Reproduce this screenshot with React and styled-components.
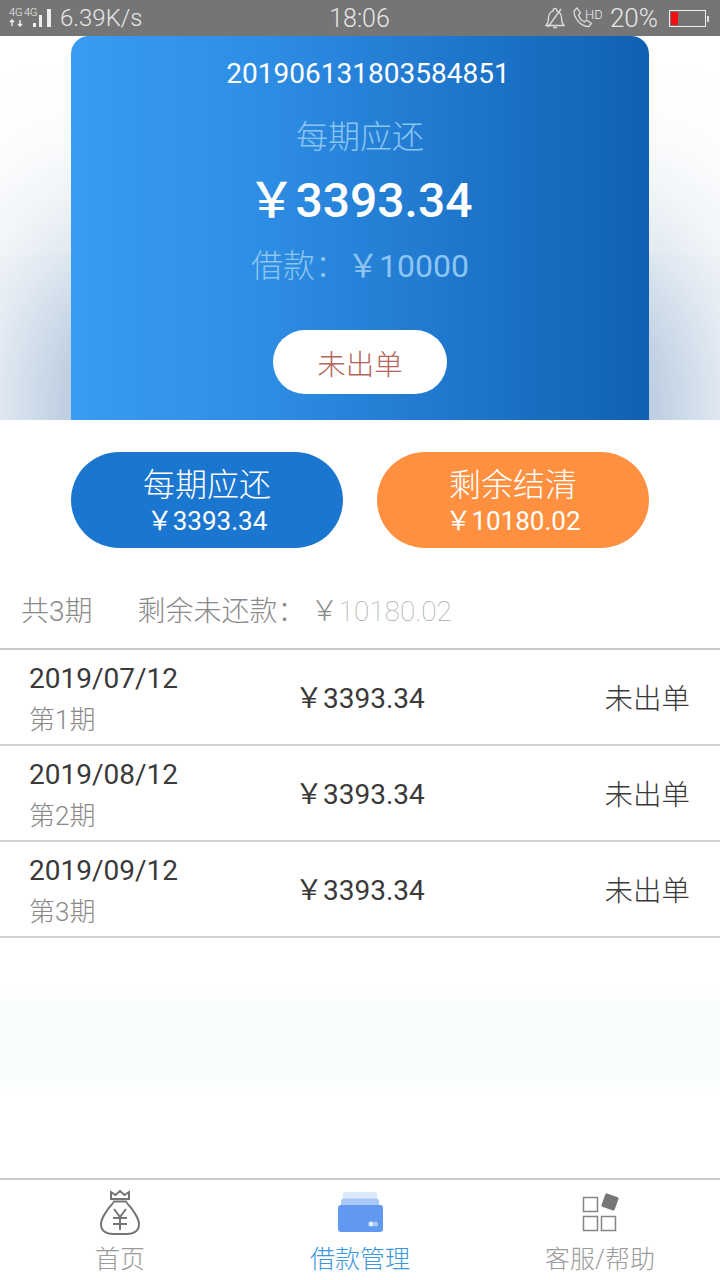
import React from "react";
import styled, { createGlobalStyle } from "styled-components";

const Global = createGlobalStyle`
  html, body { margin: 0; padding: 0; background: #fff; }
  body { font-family: Roboto, "Noto Sans CJK SC", sans-serif; }
  * { box-sizing: border-box; }
`;

const rows = [
  { date: "2019/07/12", term: "第1期" },
  { date: "2019/08/12", term: "第2期" },
  { date: "2019/09/12", term: "第3期" },
];

const Page = styled.div`
  width: 720px;
  height: 1280px;
  display: flex;
  flex-direction: column;
  overflow: hidden;
  background: #fff;
`;

const StatusBar = styled.div`
  height: 36px;
  flex: none;
  background: #757575;
  color: #e6e6e6;
  display: grid;
  grid-template-columns: 1fr auto 1fr;
  align-items: center;
  padding: 0 10px 0 9px;
  font-size: 25px;
  font-weight: 300;
`;

const StatusLeft = styled.div`
  display: flex;
  align-items: center;
  gap: 7px;
  font-size: 24px;
`;

const StatusRight = styled.div`
  display: flex;
  align-items: center;
  justify-content: flex-end;
  gap: 8px;
  font-size: 26px;
`;

const Battery = styled.div`
  width: 37px;
  height: 17px;
  border: 1px solid #eee;
  padding: 1px;
  margin: 0 4px 0 3px;
  position: relative;
  &::before {
    content: "";
    display: block;
    width: 7px;
    height: 100%;
    background: #f01010;
  }
  &::after {
    content: "";
    position: absolute;
    right: -4px;
    top: 5px;
    width: 2px;
    height: 6px;
    background: #ddd;
  }
`;

const Hero = styled.div`
  height: 384px;
  flex: none;
  overflow: hidden;
  display: flex;
  justify-content: center;
`;

const Card = styled.div`
  width: 578px;
  height: 384px;
  border-radius: 18px 18px 0 0;
  background: linear-gradient(90deg, #379cf2 0%, #2f8fe6 30%, #1f78cd 65%, #1060b3 100%);
  box-shadow: 0 230px 180px rgba(20, 80, 150, 0.72);
  display: flex;
  flex-direction: column;
  align-items: center;
  color: #fff;
`;

const OrderNo = styled.div`
  margin: 19px 0 0 16px;
  font-size: 28px;
  line-height: 38px;
`;

const CardLabel = styled.div`
  margin-top: 24px;
  font-size: 32px;
  line-height: 40px;
  font-weight: 300;
  color: #8cc4f2;
`;

const CardAmount = styled.div`
  margin-top: 17px;
  font-size: 48px;
  line-height: 54px;
  font-weight: 500;
`;

const CardLoan = styled.div`
  margin-top: 17px;
  font-size: 32px;
  line-height: 42px;
  font-weight: 300;
  color: #8cc4f2;
`;

const LoanValue = styled.span`
  font-weight: 400;
`;

const StatusPill = styled.div`
  margin-top: 43px;
  width: 174px;
  height: 64px;
  border-radius: 32px;
  background: #fff;
  color: #b5655a;
  font-size: 28.5px;
  font-weight: 300;
  display: flex;
  align-items: center;
  justify-content: center;
`;

const Actions = styled.div`
  display: flex;
  justify-content: center;
  gap: 34px;
  margin-top: 32px;
`;

const ActionButton = styled.div`
  width: 272px;
  height: 96px;
  border-radius: 48px;
  padding-top: 2px;
  background: ${(p) => p.$bg};
  color: #fff;
  display: flex;
  flex-direction: column;
  align-items: center;
  justify-content: center;
`;

const ActionTitle = styled.div`
  font-size: 32px;
  line-height: 38px;
  font-weight: 300;
`;

const ActionAmount = styled.div`
  margin-top: 2px;
  font-size: 26px;
  line-height: 30px;
`;

const Summary = styled.div`
  height: 100px;
  display: flex;
  align-items: center;
  padding: 22px 0 0 21px;
  font-size: 28px;
  font-weight: 300;
  color: #8a8a8a;
  gap: 45px;
`;

const SummaryYen = styled.span`
  margin-left: 5px;
`;

const Remain = styled.span`
  color: #aaa;
  font-weight: 100;
`;

const Table = styled.div`
  border-top: 2px solid #c9c9c9;
`;

const Row = styled.div`
  height: 96px;
  border-bottom: 2px solid #cfcfcf;
  display: grid;
  grid-template-columns: 266px 1fr auto;
  align-items: center;
  padding: 0 30px 0 29px;
  color: #3a3a3a;
  font-size: 28px;
`;

const RowDateBlock = styled.div`
  padding-top: 4px;
`;

const RowDate = styled.div`
  line-height: 40px;
  margin-bottom: 2px;
`;

const RowTerm = styled.div`
  font-size: 26px;
  line-height: 38px;
  color: #8a8a8a;
  font-weight: 300;
`;

const Cell = styled.div`
  padding-bottom: 2px;
  font-size: ${(p) => p.$size || 28}px;
  font-weight: ${(p) => p.$weight || 400};
`;

const Spacer = styled.div`
  flex: 1;
  background: linear-gradient(180deg, #fff 52px, #fafdfd 72px, #fbfefe 140px, #fff 156px);
`;

const TabBar = styled.div`
  height: 102px;
  flex: none;
  border-top: 2px solid #c9c9c9;
  display: grid;
  grid-template-columns: 240px 240px 240px;
`;

const Tab = styled.div`
  display: flex;
  flex-direction: column;
  align-items: center;
  padding-top: 9px;
  color: ${(p) => (p.$active ? "#3d97dc" : "#9b9b9b")};
  font-size: 25px;
  font-weight: 300;
  line-height: 34px;
`;

const TabIcon = styled.svg`
  width: 50px;
  height: 48px;
  margin-bottom: 6px;
  flex: none;
`;

const SignalIcon = () => (
  <svg width="44" height="24" viewBox="0 0 44 24">
    <text x="0" y="10" fontSize="11" fill="#eee" fontFamily="Roboto">4G</text>
    <text x="15" y="10" fontSize="11" fill="#eee" fontFamily="Roboto">4G</text>
    <path d="M3 14v6M1 16l2-2 2 2M11 14v6M9 18l2 2 2-2" stroke="#eee" strokeWidth="1.500" fill="none" />
    <path d="M24 17h3v4h-3zM30 9h3v12h-3zM38 3h4v18h-4z" fill="#eee" />
  </svg>
);

const BellOff = () => (
  <svg width="20" height="22" viewBox="0 0 20 22" fill="none" stroke="#ddd" strokeWidth="1.3">
    <path d="M1 18.500h18c-2-2-2.500-4-2.500-7.500 0-3.500-2-6-4.500-6.800C12 2.500 11 1.500 10 1.500S8 2.500 8 4.200C5.500 5 3.500 7.500 3.500 11c0 3.500-.5 5.500-2.500 7.500z" />
    <path d="M8 20.500h4M3 20L16 2" />
  </svg>
);

const CallHd = () => (
  <svg width="29" height="24" viewBox="0 0 29 24" fill="none" stroke="#ddd" strokeWidth="1.3">
    <path d="M1 5l3-3 3.500 5-2 2c1 3 3 5.500 6 7l2-2 5 3.500-2.500 3C9 21 1 13 1 5z" />
    <text x="12" y="13" fontSize="13" fill="#eee" stroke="none" fontFamily="Roboto">HD</text>
  </svg>
);

const BagIcon = () => (
  <TabIcon viewBox="0 0 50 48" fill="none" stroke="#757575" strokeWidth="2">
    <path d="M16 3l4.500 3L25 2l4.500 4L34 3v7H16z" />
    <path d="M19 12.500h12c1 2.500 4 4 7 9 3 5 6 8 6 14 0 6-5 9.500-12 9.500H18C11 45 6 41.500 6 35.500c0-6 3-9 6-14 3-5 6-6.500 7-9z" />
    <path d="M19 20l6 8 6-8M18 29h14M18 35h14M25 28v13" />
  </TabIcon>
);

const WalletIcon = () => (
  <TabIcon viewBox="0 0 50 48">
    <path d="M8 5c0-1 1-2 2-2h30c1 0 2 1 2 2v6H8z" fill="#dce8fb" />
    <path d="M6 12c0-1.500 1-2.500 2.500-2.500h33c1.500 0 2.500 1 2.500 2.500v6H6z" fill="#a9c8f7" />
    <rect x="3" y="16" width="45" height="27" rx="3" fill="#6099ef" />
    <circle cx="36" cy="35" r="2.500" fill="#e4eefc" />
    <circle cx="40.500" cy="35" r="2.500" fill="#a9c8f7" />
  </TabIcon>
);

const GridIcon = () => (
  <TabIcon viewBox="0 0 50 48" fill="none" stroke="#858585" strokeWidth="1.500">
    <rect x="8.500" y="8.500" width="14" height="14" />
    <rect x="8.500" y="27.500" width="14" height="14" />
    <rect x="26.500" y="27.500" width="14" height="14" />
    <rect x="28" y="6" width="14" height="14" rx="1.500" transform="rotate(20 35 13)" fill="#777" stroke="none" />
  </TabIcon>
);

export default function App() {
  return (
    <Page>
      <Global />
      <StatusBar>
        <StatusLeft>
          <SignalIcon />
          <span>6.39K/s</span>
        </StatusLeft>
        <span>18:06</span>
        <StatusRight>
          <BellOff />
          <CallHd />
          <span>20%</span>
          <Battery />
        </StatusRight>
      </StatusBar>

      <Hero>
        <Card>
          <OrderNo>201906131803584851</OrderNo>
          <CardLabel>每期应还</CardLabel>
          <CardAmount>￥3393.34</CardAmount>
          <CardLoan>
            借款：<LoanValue>￥10000</LoanValue>
          </CardLoan>
          <StatusPill>未出单</StatusPill>
        </Card>
      </Hero>

      <Actions>
        <ActionButton $bg="#1a76cf">
          <ActionTitle>每期应还</ActionTitle>
          <ActionAmount>￥3393.34</ActionAmount>
        </ActionButton>
        <ActionButton $bg="#ff9040">
          <ActionTitle>剩余结清</ActionTitle>
          <ActionAmount>￥10180.02</ActionAmount>
        </ActionButton>
      </Actions>

      <Summary>
        <span>共3期</span>
        <span>
          剩余未还款：<SummaryYen>￥</SummaryYen>
          <Remain>10180.02</Remain>
        </span>
      </Summary>

      <Table>
        {rows.map((r) => (
          <Row key={r.term}>
            <RowDateBlock>
              <RowDate>{r.date}</RowDate>
              <RowTerm>{r.term}</RowTerm>
            </RowDateBlock>
            <Cell>￥3393.34</Cell>
            <Cell $weight={300} $size={28.5}>未出单</Cell>
          </Row>
        ))}
      </Table>

      <Spacer />

      <TabBar>
        <Tab>
          <BagIcon />
          首页
        </Tab>
        <Tab $active>
          <WalletIcon />
          借款管理
        </Tab>
        <Tab>
          <GridIcon />
          客服/帮助
        </Tab>
      </TabBar>
    </Page>
  );
}
